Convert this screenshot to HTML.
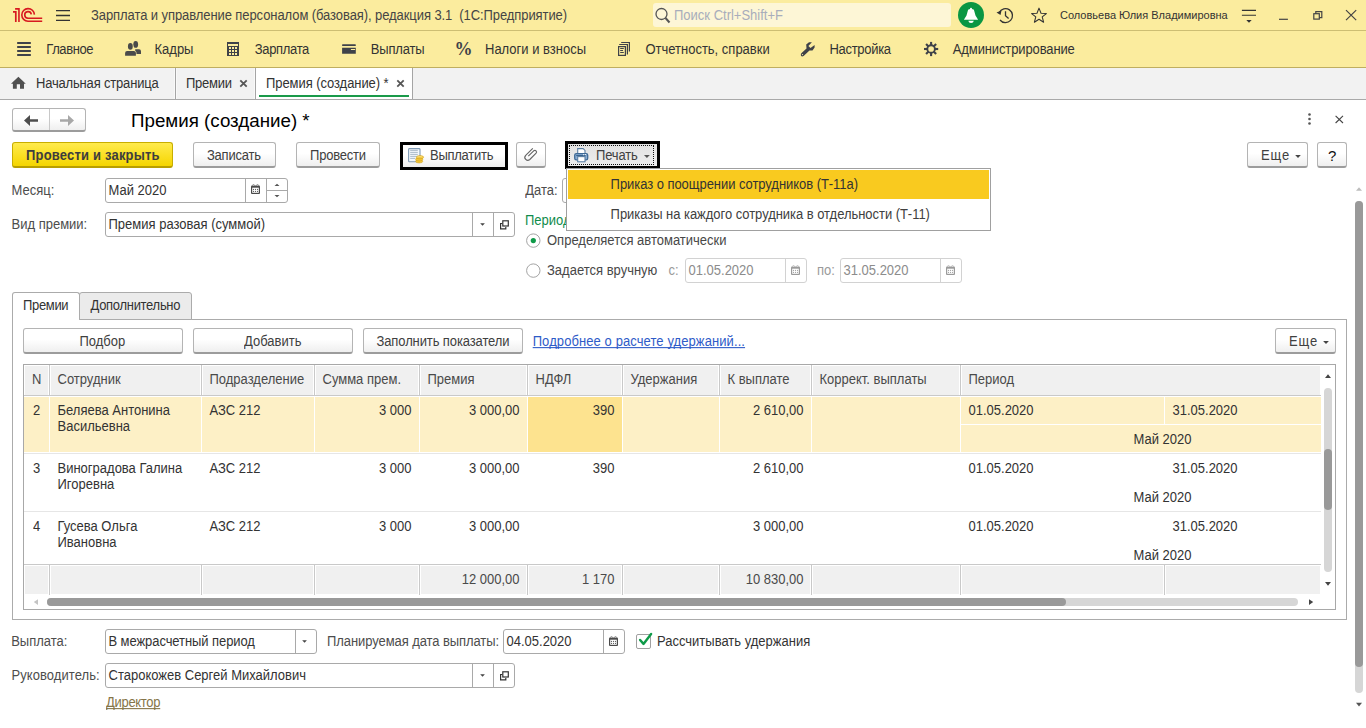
<!DOCTYPE html><html><head><meta charset="utf-8"><style>
*{margin:0;padding:0;box-sizing:border-box}
html,body{width:1366px;height:728px;overflow:hidden}
body{position:relative;background:#fff;font-family:"Liberation Sans",sans-serif;font-size:13px;color:#333}
.a{position:absolute}
.t{position:absolute;white-space:nowrap}
.btn{position:absolute;border:1px solid #B4B4B4;border-bottom:2px solid #9C9C9C;border-radius:3px;background:linear-gradient(#fff 0%,#fff 45%,#EFEFEF 100%)}
.fld{position:absolute;border:1px solid #A9A9A9;border-radius:3px;background:#fff}
</style></head><body>
<div class="a" style="left:0px;top:0px;width:1366px;height:30px;background:#FBEC9E"></div>
<div class="a" style="left:0px;top:30px;width:1366px;height:1px;background:#CDBE73"></div>
<div class="a" style="left:0px;top:31px;width:1366px;height:36px;background:#FBEC9E"></div>
<div class="a" style="left:0px;top:67px;width:1366px;height:1px;background:#BFAE60"></div>
<div class="a" style="left:0px;top:68px;width:1366px;height:31px;background:#F2F2F2"></div>
<div class="a" style="left:0px;top:99px;width:1366px;height:1px;background:#A9A9A9"></div>
<svg class="a" style="left:0px;top:0px;" width="50" height="30" viewBox="0 0 50 30"><g fill="none" stroke="#D71920" stroke-width="1.6"><path d="M15.1,8.85 H18.95 V22"/><path d="M13,11.9 H15.8 V22" stroke-width="1.7"/><path d="M34.4,14.6 A6.3,6.3 0 1 0 28,21.2 L42.2,21.2"/><path d="M31.3,14.4 A3.3,3.3 0 1 0 28,18.2 L42.2,18.2"/></g></svg>
<svg class="a" style="left:50px;top:0px;" width="30" height="30" viewBox="0 0 30 30"><g stroke="#333" stroke-width="1.3"><path d="M6,10.6H20M6,15.5H20M6,20.4H20"/></g></svg>
<div class="t" style="left:91px;top:8.00px;font-size:13.0px;line-height:15px;color:#454545;transform:scaleY(1.08);transform-origin:0 12.00px;letter-spacing:-0.08px">Зарплата и управление персоналом (базовая), редакция 3.1&nbsp; (1С:Предприятие)</div>
<div class="a" style="left:653px;top:3px;width:298px;height:24px;background:#FDF6D6;border-radius:3px"></div>
<svg class="a" style="left:650px;top:3px;" width="24" height="24" viewBox="0 0 24 24"><circle cx="11.5" cy="11" r="5.5" fill="none" stroke="#555" stroke-width="1.3"/><path d="M15.5,15 L19.5,19.5" stroke="#555" stroke-width="2"/></svg>
<div class="t" style="left:674px;top:7.50px;font-size:13.0px;line-height:15px;color:#A8ADBB;letter-spacing:0.0px;transform:scaleY(1.08);transform-origin:0 12.00px;">Поиск Ctrl+Shift+F</div>
<svg class="a" style="left:956px;top:0px;" width="30" height="30" viewBox="0 0 30 30"><circle cx="15" cy="15" r="13" fill="#0A9643"/><circle cx="15" cy="8.8" r="1" fill="#fff"/><path d="M12.1,9.7 C13,8.8 17,8.8 17.9,9.7 L19.5,15.6 L22.1,19.7 H7.9 L10.5,15.6 Z" fill="#fff"/><path d="M12.3,20.8 H17.8 Q17.4,23 15.05,23 Q12.7,23 12.3,20.8 Z" fill="#fff"/></svg>
<svg class="a" style="left:993px;top:3px;" width="24" height="24" viewBox="0 0 24 24"><g fill="none" stroke="#333" stroke-width="1.3"><path d="M6.2,9.5 A7,7 0 1 1 7,17"/><path d="M12.5,8.3 V12.6 L15.6,15.5"/></g><path d="M3.5,9.5 L8.5,7.5 L7.5,12 Z" fill="#333"/></svg>
<svg class="a" style="left:1027px;top:3px;" width="24" height="24" viewBox="0 0 24 24"><path transform="translate(12,12.3) scale(0.92) translate(-12,-12.3)" d="M12,4.5 L14.2,10 L20,10.4 L15.5,14 L17,19.8 L12,16.6 L7,19.8 L8.5,14 L4,10.4 L9.8,10 Z" fill="none" stroke="#333" stroke-width="1.15" stroke-linejoin="round"/></svg>
<div class="t" style="left:1060px;top:8.69px;font-size:11px;line-height:13px;color:#333;">Соловьева Юлия Владимировна</div>
<svg class="a" style="left:1238px;top:3px;" width="24" height="24" viewBox="0 0 24 24"><g stroke="#333" stroke-width="1.1"><path d="M3.9,7.4H18M3.9,12.3H18"/></g><path d="M8.3,17.1 L13.7,17.1 L11,19.8 Z" fill="#333"/></svg>
<svg class="a" style="left:1270px;top:3px;" width="96" height="24" viewBox="0 0 96 24"><g stroke="#444" stroke-width="1.2" fill="none"><path d="M9,16.3H17.9"/><rect x="43.8" y="10.7" width="5.5" height="5.4"/><path d="M45.8,10.7V8.7H51.8V14.6H49.3"/><path d="M76,7.1 L86.2,17.1 M86.2,7.1 L76,17.1"/></g></svg>
<svg class="a" style="left:0px;top:31px;" width="40" height="36" viewBox="0 0 40 36"><g fill="#3F4249"><rect x="17" y="11" width="14" height="2" rx="0.8"/><rect x="17" y="15" width="14" height="2" rx="0.8"/><rect x="17" y="19" width="14" height="2" rx="0.8"/><rect x="17" y="23" width="14" height="2" rx="0.8"/></g></svg>
<div class="t" style="left:46.3px;top:42.30px;font-size:13.0px;line-height:15px;color:#333;transform:scaleY(1.08);transform-origin:0 12.00px;letter-spacing:-0.42px">Главное</div>
<div class="t" style="left:154.5px;top:42.30px;font-size:13.0px;line-height:15px;color:#333;transform:scaleY(1.08);transform-origin:0 12.00px;letter-spacing:0px">Кадры</div>
<div class="t" style="left:254.8px;top:42.30px;font-size:13.0px;line-height:15px;color:#333;transform:scaleY(1.08);transform-origin:0 12.00px;letter-spacing:-0.34px">Зарплата</div>
<div class="t" style="left:370.8px;top:42.30px;font-size:13.0px;line-height:15px;color:#333;transform:scaleY(1.08);transform-origin:0 12.00px;letter-spacing:-0.17px">Выплаты</div>
<div class="t" style="left:485px;top:42.30px;font-size:13.0px;line-height:15px;color:#333;transform:scaleY(1.08);transform-origin:0 12.00px;letter-spacing:0px">Налоги и взносы</div>
<div class="t" style="left:645.4px;top:42.30px;font-size:13.0px;line-height:15px;color:#333;transform:scaleY(1.08);transform-origin:0 12.00px;letter-spacing:0px">Отчетность, справки</div>
<div class="t" style="left:829.4px;top:42.30px;font-size:13.0px;line-height:15px;color:#333;transform:scaleY(1.08);transform-origin:0 12.00px;letter-spacing:-0.29px">Настройка</div>
<div class="t" style="left:952.8px;top:42.30px;font-size:13.0px;line-height:15px;color:#333;transform:scaleY(1.08);transform-origin:0 12.00px;letter-spacing:-0.12px">Администрирование</div>
<svg class="a" style="left:120px;top:38px;" width="24" height="22" viewBox="0 0 24 22"><g fill="#4A4A4A"><ellipse cx="15.7" cy="6.4" rx="2.4" ry="3.4"/><path d="M15.2,11.2 H19 Q21,11.2 21,13.2 V15.9 H15.2 Z"/><g stroke="#FBEC9E" stroke-width="1.1" style="paint-order:stroke"><ellipse cx="10.35" cy="8.4" rx="2.4" ry="3.3"/><path d="M5.1,15 Q5.1,13 7.1,13 H13.9 Q15.9,13 15.9,15 V17.8 H5.1 Z"/></g></g></svg>
<svg class="a" style="left:220px;top:38px;" width="24" height="22" viewBox="0 0 24 22"><path fill="#3F4249" fill-rule="evenodd" d="M7,4 H19 V18 H7 Z M8,6 V8 H18 V6 Z M9,9 V11 H11 V9 Z M12,9 V11 H14 V9 Z M15,9 V11 H17 V9 Z M9,12 V14 H11 V12 Z M12,12 V14 H14 V12 Z M15,12 V14 H17 V12 Z M9,15 V17 H11 V15 Z M12,15 V17 H14 V15 Z M15,15 V17 H17 V15 Z"/></svg>
<svg class="a" style="left:335px;top:38px;" width="24" height="22" viewBox="0 0 24 22"><g fill="#3F4249"><rect x="7.1" y="6.2" width="13.7" height="1.8" rx="0.6"/><path fill-rule="evenodd" d="M7.1,9.8 H20.8 V15.7 H7.1 Z M15.9,11 V12.1 H20.1 V11 Z"/></g></svg>
<div class="t" style="left:454.6px;top:39.2px;font-family:'Liberation Serif',serif;font-weight:bold;font-size:18px;line-height:20px;color:#3F4249">%</div>
<svg class="a" style="left:610px;top:38px;" width="24" height="22" viewBox="0 0 24 22"><g fill="none" stroke="#3F4249" stroke-width="1.2"><rect x="8.6" y="8.6" width="6.8" height="8.8"/><path d="M10.2,10.5H13.8M10.2,12.5H13M10.2,14.5H13.8" stroke-width="1"/><path d="M9.2,6.5H17.4V16.6"/><path d="M11.2,4.5H19.4V13.4"/></g></svg>
<svg class="a" style="left:795px;top:38px;" width="24" height="22" viewBox="0 0 24 22"><g fill="#3F4249"><path d="M11.2,6.5 L14,4.2 L16.9,4.2 L13.4,8 L15.5,10 L19.6,7 L19.6,9.6 L17.5,12.5 L14.5,12.6 L8.6,18 Q6.8,19.2 5.9,17.4 Q5.5,16 6.6,15 L11.5,10.4 Z"/></g><circle cx="7.5" cy="16.6" r="0.7" fill="#FBEC9E"/></svg>
<svg class="a" style="left:915px;top:36px;" width="30" height="26" viewBox="0 0 30 26"><g transform="translate(16.1,13)" fill="#3F4249"><rect x="-1.05" y="-7.1" width="2.1" height="3.4" transform="rotate(0)"/><rect x="-1.05" y="-7.1" width="2.1" height="3.4" transform="rotate(45)"/><rect x="-1.05" y="-7.1" width="2.1" height="3.4" transform="rotate(90)"/><rect x="-1.05" y="-7.1" width="2.1" height="3.4" transform="rotate(135)"/><rect x="-1.05" y="-7.1" width="2.1" height="3.4" transform="rotate(180)"/><rect x="-1.05" y="-7.1" width="2.1" height="3.4" transform="rotate(225)"/><rect x="-1.05" y="-7.1" width="2.1" height="3.4" transform="rotate(270)"/><rect x="-1.05" y="-7.1" width="2.1" height="3.4" transform="rotate(315)"/><circle r="3.8" fill="none" stroke="#3F4249" stroke-width="1.9"/></g></svg>
<svg class="a" style="left:0px;top:68px;" width="40" height="31" viewBox="0 0 40 31"><path fill="#505050" d="M11,15.7 L18.4,8.8 L25.8,15.7 L24,15.7 L24,20.8 L20,20.8 L20,16.2 L16.8,16.2 L16.8,20.8 L12.9,20.8 L12.9,15.7 Z"/></svg>
<div class="t" style="left:36px;top:76.00px;font-size:13.0px;line-height:15px;color:#333;transform:scaleY(1.08);transform-origin:0 12.00px;letter-spacing:-0.18px">Начальная страница</div>
<div class="a" style="left:174px;top:68px;width:3px;height:31px;background:#F9F9F9"></div>
<div class="a" style="left:175px;top:68px;width:1px;height:31px;background:#A5A5A5"></div>
<div class="t" style="left:186px;top:76.00px;font-size:13.0px;line-height:15px;color:#333;transform:scaleY(1.08);transform-origin:0 12.00px;letter-spacing:-0.24px">Премии</div>
<svg class="a" style="left:236px;top:76px;" width="16" height="16" viewBox="0 0 16 16"><path d="M4.3,4.3 L10.7,10.7 M10.7,4.3 L4.3,10.7" stroke="#555" stroke-width="1.8"/></svg>
<div class="a" style="left:254px;top:68px;width:3px;height:31px;background:#F9F9F9"></div>
<div class="a" style="left:255px;top:68px;width:1px;height:31px;background:#A5A5A5"></div>
<div class="a" style="left:256px;top:68px;width:156px;height:31px;background:#fff"></div>
<div class="a" style="left:259px;top:95px;width:150px;height:2px;background:#1A9A4A"></div>
<div class="t" style="left:266px;top:76.00px;font-size:13.0px;line-height:15px;color:#333;transform:scaleY(1.08);transform-origin:0 12.00px;letter-spacing:-0.07px">Премия (создание) *</div>
<svg class="a" style="left:393px;top:76px;" width="16" height="16" viewBox="0 0 16 16"><path d="M4.3,4.3 L10.7,10.7 M10.7,4.3 L4.3,10.7" stroke="#555" stroke-width="1.8"/></svg>
<div class="a" style="left:412px;top:68px;width:1px;height:31px;background:#A5A5A5"></div>
<div class="a" style="left:12px;top:108px;width:74px;height:24px;border:1px solid #B4B4B4;border-bottom:2px solid #9C9C9C;border-radius:3px;background:linear-gradient(#fff 0%,#fff 45%,#EFEFEF 100%)"></div>
<div class="a" style="left:49px;top:109px;width:1px;height:21px;background:#C8C8C8"></div>
<svg class="a" style="left:12px;top:100px;" width="74" height="40" viewBox="0 0 74 40"><path fill="#4D4D4D" d="M12,20.5 L18,15.1 L18,19.2 L26,19.2 L26,21.8 L18,21.8 L18,25.9 Z"/><path fill="#A8A8A8" d="M62,20.5 L56,15.1 L56,19.2 L48,19.2 L48,21.8 L56,21.8 L56,25.9 Z"/></svg>
<div class="t" style="left:131px;top:109.50px;font-size:18.75px;line-height:22px;color:#000;">Премия (создание) *</div>
<svg class="a" style="left:1300px;top:108px;" width="20" height="20" viewBox="0 0 20 20"><g fill="#555"><circle cx="9.5" cy="6.5" r="1.3"/><circle cx="9.5" cy="11" r="1.3"/><circle cx="9.5" cy="15.5" r="1.3"/></g></svg>
<svg class="a" style="left:1326px;top:108px;" width="24" height="20" viewBox="0 0 24 20"><path d="M9.6,7.8 L17,15 M17,7.8 L9.6,15" stroke="#444" stroke-width="1.1"/></svg>
<div class="a" style="left:12px;top:142px;width:161px;height:26px;border:1px solid #C8AE00;border-bottom:2px solid #B89E00;border-radius:3px;background:linear-gradient(#FFEB4D,#F5D500)"></div>
<div class="t" style="left:26px;top:148.00px;font-size:13.0px;line-height:15px;color:#3D3D3D;transform:scaleY(1.08);transform-origin:0 12.00px;font-weight:bold;letter-spacing:0.19px">Провести и закрыть</div>
<div class="btn" style="left:193px;top:142px;width:83px;height:26px"></div>
<div class="t" style="left:207px;top:148.00px;font-size:13.0px;line-height:15px;color:#404040;transform:scaleY(1.08);transform-origin:0 12.00px;letter-spacing:-0.23px">Записать</div>
<div class="btn" style="left:296px;top:142px;width:84px;height:26px"></div>
<div class="t" style="left:310px;top:148.00px;font-size:13.0px;line-height:15px;color:#404040;transform:scaleY(1.08);transform-origin:0 12.00px;letter-spacing:-0.21px">Провести</div>
<div class="a" style="left:400px;top:142px;width:108px;height:28px;background:#000"></div>
<div class="a" style="left:403px;top:145px;width:102px;height:22px;background:linear-gradient(#fff 0%,#fff 45%,#EDEDED 100%)"></div>
<svg class="a" style="left:405px;top:145px;" width="22" height="22" viewBox="0 0 22 22"><rect x="3.6" y="3.6" width="11.4" height="13.2" rx="0.8" fill="#F4F8FC" stroke="#7F9AB5" stroke-width="1.1"/><path d="M5.2,5.4H12.8M5.2,7.4H12.8M5.2,9.4H12.8M5.2,11.4H12.8M5.2,13.4H10" stroke="#A3B2C2" stroke-width="0.9"/><g fill="#F3C63A" stroke="#C89A18" stroke-width="0.5"><ellipse cx="14.2" cy="16.3" rx="3.6" ry="1.7"/><ellipse cx="14.2" cy="14.3" rx="3.6" ry="1.7"/><ellipse cx="15" cy="12.2" rx="3.6" ry="1.7"/></g><path d="M12.2,12 Q15,11 17.5,12" stroke="#FBE69A" stroke-width="0.7" fill="none"/></svg>
<div class="t" style="left:430px;top:148.00px;font-size:13.0px;line-height:15px;color:#404040;transform:scaleY(1.08);transform-origin:0 12.00px;letter-spacing:-0.26px">Выплатить</div>
<div class="btn" style="left:516px;top:142px;width:30px;height:26px"></div>
<svg class="a" style="left:516px;top:142px;" width="30" height="26" viewBox="0 0 30 26"><path d="M16.8,6.3 L9.7,13.4 A2.9,2.9 0 0 0 13.8,17.5 L20.1,11.2 A1.7,1.7 0 0 0 17.7,8.8 L12.3,14.2" fill="none" stroke="#666" stroke-width="1.15"/></svg>
<div class="a" style="left:565px;top:141px;width:95px;height:28px;background:#000"></div>
<div class="a" style="left:568px;top:144px;width:89px;height:22px;background:linear-gradient(#E2E2E2,#EEEEEE)"></div>
<div class="a" style="left:569px;top:145px;width:85px;height:20px;border:1px dotted #111"></div>
<svg class="a" style="left:566px;top:143px;" width="30" height="24" viewBox="0 0 30 24"><path d="M11.7,10.5 V5.6 H17.2 L19,7.4 V10.5" fill="#fff" stroke="#5C7FA3" stroke-width="1.1"/><rect x="8.7" y="10.6" width="13" height="6.2" rx="1.6" fill="#8DB0D6" stroke="#3F6A96" stroke-width="1.3"/><path d="M10.2,12.6 H20.2" stroke="#2F5A86" stroke-width="1"/><circle cx="17.7" cy="11.7" r="0.6" fill="#fff"/><circle cx="19.6" cy="11.7" r="0.6" fill="#fff"/><rect x="11.7" y="13.6" width="7.3" height="5.2" fill="#fff" stroke="#5C7FA3" stroke-width="1.1"/></svg>
<div class="t" style="left:596px;top:148.00px;font-size:13.0px;line-height:15px;color:#404040;transform:scaleY(1.08);transform-origin:0 12.00px;letter-spacing:-0.14px">Печать</div>
<svg class="a" style="left:640px;top:150px;" width="14" height="14" viewBox="0 0 14 14"><path d="M4,4.9 L9.8,4.9 L6.9,7.9 Z" fill="#555"/></svg>
<div class="btn" style="left:1247px;top:142px;width:61px;height:26px"></div>
<div class="t" style="left:1261px;top:148.00px;font-size:13.0px;line-height:15px;color:#404040;transform:scaleY(1.08);transform-origin:0 12.00px;letter-spacing:0.9px">Еще</div>
<svg class="a" style="left:1290px;top:150px;" width="14" height="14" viewBox="0 0 14 14"><path d="M5.2,5 L10.8,5 L8,7.9 Z" fill="#444"/></svg>
<div class="btn" style="left:1317px;top:142px;width:30px;height:26px"></div>
<div class="t" style="left:1328px;top:146.80px;font-size:15px;line-height:17px;color:#111;">?</div>
<div class="t" style="left:11.5px;top:183.00px;font-size:13.0px;line-height:15px;color:#4D4D4D;letter-spacing:0.0px;transform:scaleY(1.08);transform-origin:0 12.00px;">Месяц:</div>
<div class="fld" style="left:105px;top:178px;width:183px;height:25px"></div>
<div class="a" style="left:245px;top:179px;width:1px;height:23px;background:#A9A9A9"></div>
<div class="a" style="left:266px;top:179px;width:1px;height:23px;background:#A9A9A9"></div>
<div class="a" style="left:266px;top:190px;width:21px;height:1px;background:#A9A9A9"></div>
<div class="t" style="left:108.5px;top:183.00px;font-size:13.0px;line-height:15px;color:#333;letter-spacing:0.0px;transform:scaleY(1.08);transform-origin:0 12.00px;">Май 2020</div>
<svg class="a" style="left:251px;top:184.2px;" width="10" height="11" viewBox="0 0 10 11"><rect x="0" y="1.4" width="9" height="8.6" rx="1" fill="#4A4A4A"/><rect x="1.2" y="3.7" width="6.6" height="5.1" fill="#fff"/><g fill="#4A4A4A"><circle cx="2.5" cy="5.3" r="0.6"/><circle cx="4.5" cy="5.3" r="0.6"/><circle cx="6.5" cy="5.3" r="0.6"/><circle cx="2.5" cy="7.3" r="0.6"/><circle cx="4.5" cy="7.3" r="0.6"/><circle cx="6.5" cy="7.3" r="0.6"/></g><g fill="#fff" stroke="#4A4A4A" stroke-width="0.5"><circle cx="2.5" cy="1.2" r="0.8"/><circle cx="6.5" cy="1.2" r="0.8"/></g></svg>
<svg class="a" style="left:270px;top:182px;" width="14" height="18" viewBox="0 0 14 18"><path d="M4.5,4 L7,1.8 L9.5,4 Z M4.5,13 L9.5,13 L7,15.2 Z" fill="#555"/></svg>
<div class="t" style="left:525.2px;top:183.00px;font-size:13.0px;line-height:15px;color:#4D4D4D;letter-spacing:0.0px;transform:scaleY(1.08);transform-origin:0 12.00px;">Дата:</div>
<div class="fld" style="left:562px;top:178px;width:130px;height:25px"></div>
<div class="t" style="left:11.5px;top:217.00px;font-size:13.0px;line-height:15px;color:#4D4D4D;letter-spacing:0.0px;transform:scaleY(1.08);transform-origin:0 12.00px;">Вид премии:</div>
<div class="fld" style="left:105px;top:212px;width:410px;height:25px"></div>
<div class="a" style="left:472px;top:213px;width:1px;height:23px;background:#A9A9A9"></div>
<div class="a" style="left:493px;top:213px;width:1px;height:23px;background:#A9A9A9"></div>
<div class="t" style="left:108.5px;top:217.00px;font-size:13.0px;line-height:15px;color:#333;letter-spacing:0.0px;transform:scaleY(1.08);transform-origin:0 12.00px;">Премия разовая (суммой)</div>
<svg class="a" style="left:478px;top:220px;" width="10" height="10" viewBox="0 0 10 10"><path d="M2.2,3.2 L6.9,3.2 L4.55,5.8 Z" fill="#444"/></svg>
<svg class="a" style="left:498px;top:218px;" width="14" height="14" viewBox="0 0 14 14"><g fill="none" stroke="#333" stroke-width="1.2"><rect x="4.8" y="2.8" width="5.5" height="5.2"/><path d="M4.3,5.5 H2.6 V10.8 H7.8 V9"/></g></svg>
<div class="t" style="left:525px;top:213.00px;font-size:13.0px;line-height:15px;color:#108C4C;letter-spacing:0.0px;transform:scaleY(1.08);transform-origin:0 12.00px;">Период</div>
<svg class="a" style="left:524px;top:231px;" width="18" height="18" viewBox="0 0 18 18"><circle cx="9.3" cy="9.6" r="6.7" fill="#fff" stroke="#A4A4A4" stroke-width="1"/><circle cx="9.3" cy="9.6" r="2.6" fill="#0E9A48"/></svg>
<div class="t" style="left:547px;top:232.50px;font-size:13.0px;line-height:15px;color:#484848;letter-spacing:0.0px;transform:scaleY(1.08);transform-origin:0 12.00px;">Определяется автоматически</div>
<svg class="a" style="left:524px;top:261px;" width="18" height="18" viewBox="0 0 18 18"><circle cx="9.3" cy="9.6" r="6.7" fill="#fff" stroke="#A4A4A4" stroke-width="1"/></svg>
<div class="t" style="left:547px;top:263.00px;font-size:13.0px;line-height:15px;color:#484848;letter-spacing:0.0px;transform:scaleY(1.08);transform-origin:0 12.00px;">Задается вручную</div>
<div class="t" style="left:668.5px;top:263.00px;font-size:13.0px;line-height:15px;color:#9A9A9A;letter-spacing:0.0px;transform:scaleY(1.08);transform-origin:0 12.00px;">с:</div>
<div class="fld" style="left:685px;top:258px;width:122px;height:25px;border-color:#D2D2D2"></div>
<div class="a" style="left:785px;top:259px;width:1px;height:23px;background:#D2D2D2"></div>
<div class="t" style="left:688.5px;top:263.00px;font-size:13.0px;line-height:15px;color:#8C8C8C;letter-spacing:0.0px;transform:scaleY(1.08);transform-origin:0 12.00px;">01.05.2020</div>
<svg class="a" style="left:791px;top:264.5px;" width="10" height="11" viewBox="0 0 10 11"><rect x="0" y="1.4" width="9" height="8.6" rx="1" fill="#9A9A9A"/><rect x="1.2" y="3.7" width="6.6" height="5.1" fill="#fff"/><g fill="#9A9A9A"><circle cx="2.5" cy="5.3" r="0.6"/><circle cx="4.5" cy="5.3" r="0.6"/><circle cx="6.5" cy="5.3" r="0.6"/><circle cx="2.5" cy="7.3" r="0.6"/><circle cx="4.5" cy="7.3" r="0.6"/><circle cx="6.5" cy="7.3" r="0.6"/></g><g fill="#fff" stroke="#9A9A9A" stroke-width="0.5"><circle cx="2.5" cy="1.2" r="0.8"/><circle cx="6.5" cy="1.2" r="0.8"/></g></svg>
<div class="t" style="left:817px;top:263.00px;font-size:13.0px;line-height:15px;color:#9A9A9A;letter-spacing:0.0px;transform:scaleY(1.08);transform-origin:0 12.00px;">по:</div>
<div class="fld" style="left:840px;top:258px;width:122px;height:25px;border-color:#D2D2D2"></div>
<div class="a" style="left:940px;top:259px;width:1px;height:23px;background:#D2D2D2"></div>
<div class="t" style="left:843.5px;top:263.00px;font-size:13.0px;line-height:15px;color:#8C8C8C;letter-spacing:0.0px;transform:scaleY(1.08);transform-origin:0 12.00px;">31.05.2020</div>
<svg class="a" style="left:946px;top:264.5px;" width="10" height="11" viewBox="0 0 10 11"><rect x="0" y="1.4" width="9" height="8.6" rx="1" fill="#9A9A9A"/><rect x="1.2" y="3.7" width="6.6" height="5.1" fill="#fff"/><g fill="#9A9A9A"><circle cx="2.5" cy="5.3" r="0.6"/><circle cx="4.5" cy="5.3" r="0.6"/><circle cx="6.5" cy="5.3" r="0.6"/><circle cx="2.5" cy="7.3" r="0.6"/><circle cx="4.5" cy="7.3" r="0.6"/><circle cx="6.5" cy="7.3" r="0.6"/></g><g fill="#fff" stroke="#9A9A9A" stroke-width="0.5"><circle cx="2.5" cy="1.2" r="0.8"/><circle cx="6.5" cy="1.2" r="0.8"/></g></svg>
<div class="a" style="left:566px;top:168px;width:425px;height:63px;background:#fff;border:1px solid #A0A0A0"></div>
<div class="a" style="left:568px;top:170px;width:421px;height:29px;background:#F9CA1F"></div>
<div class="t" style="left:610.6px;top:177.00px;font-size:13.0px;line-height:15px;color:#333;transform:scaleY(1.08);transform-origin:0 12.00px;letter-spacing:-0.05px">Приказ о поощрении сотрудников (Т-11а)</div>
<div class="t" style="left:610.6px;top:207.00px;font-size:13.0px;line-height:15px;color:#404040;transform:scaleY(1.08);transform-origin:0 12.00px;letter-spacing:-0.04px">Приказы на каждого сотрудника в отдельности (Т-11)</div>
<div class="a" style="left:12px;top:319px;width:1335px;height:301px;border:1px solid #ABABAB;border-top:none"></div>
<div class="a" style="left:191px;top:319px;width:1156px;height:1px;background:#ABABAB"></div>
<div class="a" style="left:12px;top:292px;width:68px;height:28px;background:#fff;border:1px solid #ABABAB;border-bottom:none;border-radius:3px 3px 0 0"></div>
<div class="a" style="left:79px;top:292px;width:113px;height:28px;background:#EBEBEB;border:1px solid #ABABAB;border-radius:3px 3px 0 0"></div>
<div class="t" style="left:23px;top:298.00px;font-size:13.0px;line-height:15px;color:#333;transform:scaleY(1.08);transform-origin:0 12.00px;letter-spacing:-0.34px">Премии</div>
<div class="t" style="left:90.5px;top:298.00px;font-size:13.0px;line-height:15px;color:#333;transform:scaleY(1.08);transform-origin:0 12.00px;letter-spacing:-0.3px">Дополнительно</div>
<div class="btn" style="left:23px;top:328px;width:160px;height:26px"></div>
<div class="t" style="left:79.5px;top:334.00px;font-size:13.0px;line-height:15px;color:#404040;letter-spacing:0.0px;transform:scaleY(1.08);transform-origin:0 12.00px;">Подбор</div>
<div class="btn" style="left:193px;top:328px;width:160px;height:26px"></div>
<div class="t" style="left:244px;top:334.00px;font-size:13.0px;line-height:15px;color:#404040;letter-spacing:0.0px;transform:scaleY(1.08);transform-origin:0 12.00px;">Добавить</div>
<div class="btn" style="left:363px;top:328px;width:160px;height:26px"></div>
<div class="t" style="left:376.5px;top:334.00px;font-size:13.0px;line-height:15px;color:#404040;transform:scaleY(1.08);transform-origin:0 12.00px;letter-spacing:-0.11px">Заполнить показатели</div>
<div class="t" style="left:532.7px;top:334.00px;font-size:13.0px;line-height:15px;color:#2E5BC8;transform:scaleY(1.08);transform-origin:0 12.00px;text-decoration:underline;text-decoration-skip-ink:none;letter-spacing:0.09px">Подробнее о расчете удержаний...</div>
<div class="btn" style="left:1275px;top:328px;width:61px;height:26px"></div>
<div class="t" style="left:1289px;top:334.00px;font-size:13.0px;line-height:15px;color:#404040;transform:scaleY(1.08);transform-origin:0 12.00px;letter-spacing:0.9px">Еще</div>
<svg class="a" style="left:1319px;top:335px;" width="14" height="14" viewBox="0 0 14 14"><path d="M4.1,6 L9.9,6 L7,8.9 Z" fill="#444"/></svg>
<div class="a" style="left:23px;top:364px;width:1313px;height:246px;border:1px solid #A8A8A8;background:#fff"></div>
<div class="a" style="left:25px;top:366px;width:23px;height:29px;background:#F0F0F0"></div>
<div class="a" style="left:51px;top:366px;width:149px;height:29px;background:#F0F0F0"></div>
<div class="a" style="left:203px;top:366px;width:110px;height:29px;background:#F0F0F0"></div>
<div class="a" style="left:316px;top:366px;width:102px;height:29px;background:#F0F0F0"></div>
<div class="a" style="left:421px;top:366px;width:105px;height:29px;background:#F0F0F0"></div>
<div class="a" style="left:529px;top:366px;width:92px;height:29px;background:#F0F0F0"></div>
<div class="a" style="left:624px;top:366px;width:94px;height:29px;background:#F0F0F0"></div>
<div class="a" style="left:721px;top:366px;width:89px;height:29px;background:#F0F0F0"></div>
<div class="a" style="left:813px;top:366px;width:146px;height:29px;background:#F0F0F0"></div>
<div class="a" style="left:962px;top:366px;width:358px;height:29px;background:#F0F0F0"></div>
<div class="a" style="left:49px;top:365px;width:1px;height:31px;background:#C9C9C9"></div>
<div class="a" style="left:201px;top:365px;width:1px;height:31px;background:#C9C9C9"></div>
<div class="a" style="left:314px;top:365px;width:1px;height:31px;background:#C9C9C9"></div>
<div class="a" style="left:419px;top:365px;width:1px;height:31px;background:#C9C9C9"></div>
<div class="a" style="left:527px;top:365px;width:1px;height:31px;background:#C9C9C9"></div>
<div class="a" style="left:622px;top:365px;width:1px;height:31px;background:#C9C9C9"></div>
<div class="a" style="left:719px;top:365px;width:1px;height:31px;background:#C9C9C9"></div>
<div class="a" style="left:811px;top:365px;width:1px;height:31px;background:#C9C9C9"></div>
<div class="a" style="left:960px;top:365px;width:1px;height:31px;background:#C9C9C9"></div>
<div class="a" style="left:24px;top:395px;width:1297px;height:1px;background:#C9C9C9"></div>
<div class="t" style="left:32px;top:372.00px;font-size:13.0px;line-height:15px;color:#4A4A4A;letter-spacing:0.0px;transform:scaleY(1.08);transform-origin:0 12.00px;">N</div>
<div class="t" style="left:57.5px;top:372.00px;font-size:13.0px;line-height:15px;color:#4A4A4A;letter-spacing:0.0px;transform:scaleY(1.08);transform-origin:0 12.00px;">Сотрудник</div>
<div class="t" style="left:209.5px;top:372.00px;font-size:13.0px;line-height:15px;color:#4A4A4A;letter-spacing:0.0px;transform:scaleY(1.08);transform-origin:0 12.00px;">Подразделение</div>
<div class="t" style="left:322.5px;top:372.00px;font-size:13.0px;line-height:15px;color:#4A4A4A;letter-spacing:0.0px;transform:scaleY(1.08);transform-origin:0 12.00px;">Сумма прем.</div>
<div class="t" style="left:427.5px;top:372.00px;font-size:13.0px;line-height:15px;color:#4A4A4A;letter-spacing:0.0px;transform:scaleY(1.08);transform-origin:0 12.00px;">Премия</div>
<div class="t" style="left:535.5px;top:372.00px;font-size:13.0px;line-height:15px;color:#4A4A4A;letter-spacing:0.0px;transform:scaleY(1.08);transform-origin:0 12.00px;">НДФЛ</div>
<div class="t" style="left:630.5px;top:372.00px;font-size:13.0px;line-height:15px;color:#4A4A4A;letter-spacing:0.0px;transform:scaleY(1.08);transform-origin:0 12.00px;">Удержания</div>
<div class="t" style="left:727.5px;top:372.00px;font-size:13.0px;line-height:15px;color:#4A4A4A;letter-spacing:0.0px;transform:scaleY(1.08);transform-origin:0 12.00px;">К выплате</div>
<div class="t" style="left:819.5px;top:372.00px;font-size:13.0px;line-height:15px;color:#4A4A4A;letter-spacing:0.0px;transform:scaleY(1.08);transform-origin:0 12.00px;">Коррект. выплаты</div>
<div class="t" style="left:968.5px;top:372.00px;font-size:13.0px;line-height:15px;color:#4A4A4A;letter-spacing:0.0px;transform:scaleY(1.08);transform-origin:0 12.00px;">Период</div>
<div class="a" style="left:24px;top:397px;width:1297px;height:55px;background:#FDF0C6"></div>
<div class="a" style="left:528px;top:397px;width:94px;height:55px;background:#FDE38F"></div>
<div class="a" style="left:49px;top:397px;width:1px;height:55px;background:#fff"></div>
<div class="a" style="left:201px;top:397px;width:1px;height:55px;background:#fff"></div>
<div class="a" style="left:314px;top:397px;width:1px;height:55px;background:#fff"></div>
<div class="a" style="left:419px;top:397px;width:1px;height:55px;background:#fff"></div>
<div class="a" style="left:527px;top:397px;width:1px;height:55px;background:#fff"></div>
<div class="a" style="left:622px;top:397px;width:1px;height:55px;background:#fff"></div>
<div class="a" style="left:719px;top:397px;width:1px;height:55px;background:#fff"></div>
<div class="a" style="left:811px;top:397px;width:1px;height:55px;background:#fff"></div>
<div class="a" style="left:960px;top:397px;width:1px;height:55px;background:#fff"></div>
<div class="a" style="left:961px;top:424px;width:360px;height:1px;background:#fff"></div>
<div class="a" style="left:1164px;top:397px;width:1px;height:27px;background:#fff"></div>
<div class="a" style="left:24px;top:453px;width:1297px;height:1px;background:#E6E6E6"></div>
<div class="a" style="left:24px;top:511px;width:1297px;height:1px;background:#E6E6E6"></div>
<div class="t" style="left:33px;top:403.00px;font-size:13.0px;line-height:15px;color:#333;letter-spacing:0.0px;transform:scaleY(1.08);transform-origin:0 12.00px;">2</div>
<div class="t" style="left:57.5px;top:403.00px;font-size:13.0px;line-height:15px;color:#333;letter-spacing:0.0px;transform:scaleY(1.08);transform-origin:0 12.00px;">Беляева Антонина</div>
<div class="t" style="left:57.5px;top:419.00px;font-size:13.0px;line-height:15px;color:#333;letter-spacing:0.0px;transform:scaleY(1.08);transform-origin:0 12.00px;">Васильевна</div>
<div class="t" style="left:209.5px;top:403.00px;font-size:13.0px;line-height:15px;color:#333;letter-spacing:0.0px;transform:scaleY(1.08);transform-origin:0 12.00px;">АЗС 212</div>
<div class="t" style="right:954.5px;top:403.00px;font-size:13.0px;line-height:15px;letter-spacing:0.0px;color:#333;text-align:right;transform:scaleY(1.08);transform-origin:0 12.00px">3 000</div>
<div class="t" style="right:846.5px;top:403.00px;font-size:13.0px;line-height:15px;letter-spacing:0.0px;color:#333;text-align:right;transform:scaleY(1.08);transform-origin:0 12.00px">3 000,00</div>
<div class="t" style="right:751.5px;top:403.00px;font-size:13.0px;line-height:15px;letter-spacing:0.0px;color:#333;text-align:right;transform:scaleY(1.08);transform-origin:0 12.00px">390</div>
<div class="t" style="right:562.5px;top:403.00px;font-size:13.0px;line-height:15px;letter-spacing:0.0px;color:#333;text-align:right;transform:scaleY(1.08);transform-origin:0 12.00px">2 610,00</div>
<div class="t" style="left:968.5px;top:403.00px;font-size:13.0px;line-height:15px;color:#333;letter-spacing:0.0px;transform:scaleY(1.08);transform-origin:0 12.00px;">01.05.2020</div>
<div class="t" style="left:1172.5px;top:403.00px;font-size:13.0px;line-height:15px;color:#333;letter-spacing:0.0px;transform:scaleY(1.08);transform-origin:0 12.00px;">31.05.2020</div>
<div class="t" style="left:1133.5px;top:432.00px;font-size:13.0px;line-height:15px;color:#333;letter-spacing:0.0px;transform:scaleY(1.08);transform-origin:0 12.00px;">Май 2020</div>
<div class="t" style="left:33px;top:461.00px;font-size:13.0px;line-height:15px;color:#333;letter-spacing:0.0px;transform:scaleY(1.08);transform-origin:0 12.00px;">3</div>
<div class="t" style="left:57.5px;top:461.00px;font-size:13.0px;line-height:15px;color:#333;letter-spacing:0.0px;transform:scaleY(1.08);transform-origin:0 12.00px;">Виноградова Галина</div>
<div class="t" style="left:57.5px;top:477.00px;font-size:13.0px;line-height:15px;color:#333;letter-spacing:0.0px;transform:scaleY(1.08);transform-origin:0 12.00px;">Игоревна</div>
<div class="t" style="left:209.5px;top:461.00px;font-size:13.0px;line-height:15px;color:#333;letter-spacing:0.0px;transform:scaleY(1.08);transform-origin:0 12.00px;">АЗС 212</div>
<div class="t" style="right:954.5px;top:461.00px;font-size:13.0px;line-height:15px;letter-spacing:0.0px;color:#333;text-align:right;transform:scaleY(1.08);transform-origin:0 12.00px">3 000</div>
<div class="t" style="right:846.5px;top:461.00px;font-size:13.0px;line-height:15px;letter-spacing:0.0px;color:#333;text-align:right;transform:scaleY(1.08);transform-origin:0 12.00px">3 000,00</div>
<div class="t" style="right:751.5px;top:461.00px;font-size:13.0px;line-height:15px;letter-spacing:0.0px;color:#333;text-align:right;transform:scaleY(1.08);transform-origin:0 12.00px">390</div>
<div class="t" style="right:562.5px;top:461.00px;font-size:13.0px;line-height:15px;letter-spacing:0.0px;color:#333;text-align:right;transform:scaleY(1.08);transform-origin:0 12.00px">2 610,00</div>
<div class="t" style="left:968.5px;top:461.00px;font-size:13.0px;line-height:15px;color:#333;letter-spacing:0.0px;transform:scaleY(1.08);transform-origin:0 12.00px;">01.05.2020</div>
<div class="t" style="left:1172.5px;top:461.00px;font-size:13.0px;line-height:15px;color:#333;letter-spacing:0.0px;transform:scaleY(1.08);transform-origin:0 12.00px;">31.05.2020</div>
<div class="t" style="left:1133.5px;top:490.00px;font-size:13.0px;line-height:15px;color:#333;letter-spacing:0.0px;transform:scaleY(1.08);transform-origin:0 12.00px;">Май 2020</div>
<div class="t" style="left:33px;top:519.00px;font-size:13.0px;line-height:15px;color:#333;letter-spacing:0.0px;transform:scaleY(1.08);transform-origin:0 12.00px;">4</div>
<div class="t" style="left:57.5px;top:519.00px;font-size:13.0px;line-height:15px;color:#333;letter-spacing:0.0px;transform:scaleY(1.08);transform-origin:0 12.00px;">Гусева Ольга</div>
<div class="t" style="left:57.5px;top:535.00px;font-size:13.0px;line-height:15px;color:#333;letter-spacing:0.0px;transform:scaleY(1.08);transform-origin:0 12.00px;">Ивановна</div>
<div class="t" style="left:209.5px;top:519.00px;font-size:13.0px;line-height:15px;color:#333;letter-spacing:0.0px;transform:scaleY(1.08);transform-origin:0 12.00px;">АЗС 212</div>
<div class="t" style="right:954.5px;top:519.00px;font-size:13.0px;line-height:15px;letter-spacing:0.0px;color:#333;text-align:right;transform:scaleY(1.08);transform-origin:0 12.00px">3 000</div>
<div class="t" style="right:846.5px;top:519.00px;font-size:13.0px;line-height:15px;letter-spacing:0.0px;color:#333;text-align:right;transform:scaleY(1.08);transform-origin:0 12.00px">3 000,00</div>
<div class="t" style="right:562.5px;top:519.00px;font-size:13.0px;line-height:15px;letter-spacing:0.0px;color:#333;text-align:right;transform:scaleY(1.08);transform-origin:0 12.00px">3 000,00</div>
<div class="t" style="left:968.5px;top:519.00px;font-size:13.0px;line-height:15px;color:#333;letter-spacing:0.0px;transform:scaleY(1.08);transform-origin:0 12.00px;">01.05.2020</div>
<div class="t" style="left:1172.5px;top:519.00px;font-size:13.0px;line-height:15px;color:#333;letter-spacing:0.0px;transform:scaleY(1.08);transform-origin:0 12.00px;">31.05.2020</div>
<div class="t" style="left:1133.5px;top:548.00px;font-size:13.0px;line-height:15px;color:#333;letter-spacing:0.0px;transform:scaleY(1.08);transform-origin:0 12.00px;">Май 2020</div>
<div class="a" style="left:24px;top:564px;width:1297px;height:1px;background:#C9C9C9"></div>
<div class="a" style="left:25px;top:566px;width:23px;height:28px;background:#F0F0F0"></div>
<div class="a" style="left:51px;top:566px;width:149px;height:28px;background:#F0F0F0"></div>
<div class="a" style="left:203px;top:566px;width:110px;height:28px;background:#F0F0F0"></div>
<div class="a" style="left:316px;top:566px;width:102px;height:28px;background:#F0F0F0"></div>
<div class="a" style="left:421px;top:566px;width:105px;height:28px;background:#F0F0F0"></div>
<div class="a" style="left:529px;top:566px;width:92px;height:28px;background:#F0F0F0"></div>
<div class="a" style="left:624px;top:566px;width:94px;height:28px;background:#F0F0F0"></div>
<div class="a" style="left:721px;top:566px;width:89px;height:28px;background:#F0F0F0"></div>
<div class="a" style="left:813px;top:566px;width:146px;height:28px;background:#F0F0F0"></div>
<div class="a" style="left:962px;top:566px;width:201px;height:28px;background:#F0F0F0"></div>
<div class="a" style="left:1166px;top:566px;width:154px;height:28px;background:#F0F0F0"></div>
<div class="a" style="left:49px;top:565px;width:1px;height:30px;background:#C9C9C9"></div>
<div class="a" style="left:201px;top:565px;width:1px;height:30px;background:#C9C9C9"></div>
<div class="a" style="left:314px;top:565px;width:1px;height:30px;background:#C9C9C9"></div>
<div class="a" style="left:419px;top:565px;width:1px;height:30px;background:#C9C9C9"></div>
<div class="a" style="left:527px;top:565px;width:1px;height:30px;background:#C9C9C9"></div>
<div class="a" style="left:622px;top:565px;width:1px;height:30px;background:#C9C9C9"></div>
<div class="a" style="left:719px;top:565px;width:1px;height:30px;background:#C9C9C9"></div>
<div class="a" style="left:811px;top:565px;width:1px;height:30px;background:#C9C9C9"></div>
<div class="a" style="left:960px;top:565px;width:1px;height:30px;background:#C9C9C9"></div>
<div class="a" style="left:1164px;top:565px;width:1px;height:30px;background:#C9C9C9"></div>
<div class="t" style="right:846.5px;top:572.00px;font-size:13.0px;line-height:15px;letter-spacing:0.0px;color:#4A4A4A;text-align:right;transform:scaleY(1.08);transform-origin:0 12.00px">12 000,00</div>
<div class="t" style="right:751.5px;top:572.00px;font-size:13.0px;line-height:15px;letter-spacing:0.0px;color:#4A4A4A;text-align:right;transform:scaleY(1.08);transform-origin:0 12.00px">1 170</div>
<div class="t" style="right:562.5px;top:572.00px;font-size:13.0px;line-height:15px;letter-spacing:0.0px;color:#4A4A4A;text-align:right;transform:scaleY(1.08);transform-origin:0 12.00px">10 830,00</div>
<div class="a" style="left:47px;top:598px;width:1251px;height:8px;background:#D6D6D6;border-radius:4px"></div>
<div class="a" style="left:47px;top:598px;width:1019px;height:8px;background:#999;border-radius:4px"></div>
<svg class="a" style="left:30px;top:596px;" width="12" height="12" viewBox="0 0 12 12"><path d="M8,3.2 L8,9 L3.8,6.1 Z" fill="#C4C4C4"/></svg>
<svg class="a" style="left:1304px;top:596px;" width="12" height="12" viewBox="0 0 12 12"><path d="M5,3.2 L5,9 L9.2,6.1 Z" fill="#444"/></svg>
<div class="a" style="left:1324px;top:388px;width:8px;height:184px;background:#D6D6D6;border-radius:4px"></div>
<div class="a" style="left:1324px;top:449px;width:8px;height:61px;background:#999;border-radius:4px"></div>
<svg class="a" style="left:1322px;top:370px;" width="12" height="12" viewBox="0 0 12 12"><path d="M3,8 L9,8 L6,4.2 Z" fill="#444"/></svg>
<svg class="a" style="left:1322px;top:578px;" width="12" height="12" viewBox="0 0 12 12"><path d="M3,4 L9,4 L6,7.8 Z" fill="#444"/></svg>
<div class="t" style="left:11.2px;top:633.50px;font-size:13.0px;line-height:15px;color:#4D4D4D;letter-spacing:0.0px;transform:scaleY(1.08);transform-origin:0 12.00px;">Выплата:</div>
<div class="fld" style="left:105px;top:629px;width:212px;height:25px"></div>
<div class="a" style="left:295px;top:630px;width:1px;height:23px;background:#A9A9A9"></div>
<div class="t" style="left:108.5px;top:633.50px;font-size:13.0px;line-height:15px;color:#333;transform:scaleY(1.08);transform-origin:0 12.00px;letter-spacing:-0.08px">В межрасчетный период</div>
<svg class="a" style="left:300px;top:637px;" width="10" height="10" viewBox="0 0 10 10"><path d="M2.2,3.2 L6.9,3.2 L4.55,5.8 Z" fill="#444"/></svg>
<div class="t" style="left:327px;top:633.50px;font-size:13.0px;line-height:15px;color:#4D4D4D;transform:scaleY(1.08);transform-origin:0 12.00px;letter-spacing:-0.08px">Планируемая дата выплаты:</div>
<div class="fld" style="left:503px;top:629px;width:122px;height:25px"></div>
<div class="a" style="left:603px;top:630px;width:1px;height:23px;background:#A9A9A9"></div>
<div class="t" style="left:506.5px;top:633.50px;font-size:13.0px;line-height:15px;color:#333;letter-spacing:0.0px;transform:scaleY(1.08);transform-origin:0 12.00px;">04.05.2020</div>
<svg class="a" style="left:609px;top:635.8px;" width="10" height="11" viewBox="0 0 10 11"><rect x="0" y="1.4" width="9" height="8.6" rx="1" fill="#4A4A4A"/><rect x="1.2" y="3.7" width="6.6" height="5.1" fill="#fff"/><g fill="#4A4A4A"><circle cx="2.5" cy="5.3" r="0.6"/><circle cx="4.5" cy="5.3" r="0.6"/><circle cx="6.5" cy="5.3" r="0.6"/><circle cx="2.5" cy="7.3" r="0.6"/><circle cx="4.5" cy="7.3" r="0.6"/><circle cx="6.5" cy="7.3" r="0.6"/></g><g fill="#fff" stroke="#4A4A4A" stroke-width="0.5"><circle cx="2.5" cy="1.2" r="0.8"/><circle cx="6.5" cy="1.2" r="0.8"/></g></svg>
<div class="a" style="left:636px;top:634px;width:15px;height:15px;border:1px solid #A0A0A0;border-radius:2px;background:#fff"></div>
<svg class="a" style="left:634px;top:628px;" width="22" height="22" viewBox="0 0 22 22"><path d="M6.1,12 L9.5,15.9 L17.1,6" fill="none" stroke="#0E9A48" stroke-width="2.4" stroke-linecap="round" stroke-linejoin="round"/></svg>
<div class="t" style="left:657px;top:633.50px;font-size:13.0px;line-height:15px;color:#333;letter-spacing:0.0px;transform:scaleY(1.08);transform-origin:0 12.00px;">Рассчитывать удержания</div>
<div class="t" style="left:11.4px;top:667.50px;font-size:13.0px;line-height:15px;color:#4D4D4D;transform:scaleY(1.08);transform-origin:0 12.00px;letter-spacing:0.08px">Руководитель:</div>
<div class="fld" style="left:105px;top:663px;width:410px;height:25px"></div>
<div class="a" style="left:472px;top:664px;width:1px;height:23px;background:#A9A9A9"></div>
<div class="a" style="left:493px;top:664px;width:1px;height:23px;background:#A9A9A9"></div>
<div class="t" style="left:108.5px;top:667.50px;font-size:13.0px;line-height:15px;color:#333;letter-spacing:0.0px;transform:scaleY(1.08);transform-origin:0 12.00px;">Старокожев Сергей Михайлович</div>
<svg class="a" style="left:478px;top:671px;" width="10" height="10" viewBox="0 0 10 10"><path d="M2.2,3.2 L6.9,3.2 L4.55,5.8 Z" fill="#444"/></svg>
<svg class="a" style="left:498px;top:669px;" width="14" height="14" viewBox="0 0 14 14"><g fill="none" stroke="#333" stroke-width="1.2"><rect x="4.8" y="2.8" width="5.5" height="5.2"/><path d="M4.3,5.5 H2.6 V10.8 H7.8 V9"/></g></svg>
<div class="t" style="left:106px;top:694.50px;font-size:13.0px;line-height:15px;color:#857548;transform:scaleY(1.08);transform-origin:0 12.00px;text-decoration:underline;text-decoration-skip-ink:none;letter-spacing:-0.3px">Директор</div>
<div class="a" style="left:1355px;top:201px;width:8px;height:492px;background:#D6D6D6;border-radius:4px"></div>
<div class="a" style="left:1355px;top:201px;width:8px;height:466px;background:#999;border-radius:4px"></div>
<svg class="a" style="left:1353px;top:183px;" width="12" height="12" viewBox="0 0 12 12"><path d="M3,7.8 L9,7.8 L6,4.3 Z" fill="#BDBDBD"/></svg>
<svg class="a" style="left:1353px;top:699px;" width="12" height="12" viewBox="0 0 12 12"><path d="M3,3.8 L9,3.8 L6,7.6 Z" fill="#555"/></svg>
</body></html>
